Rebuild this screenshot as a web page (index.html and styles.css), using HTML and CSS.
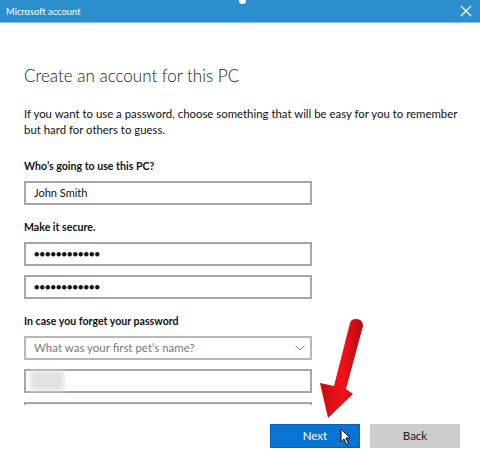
FILE: index.html
```html
<!DOCTYPE html>
<html>
<head>
<meta charset="utf-8">
<link rel="stylesheet" href="styles.css">
</head>
<body>
<div class="window">
  <div class="titlebar">
    <span class="title">Microsoft account</span>
    <span class="notch"></span>
    <svg class="close" width="12" height="12" viewBox="0 0 12 12"><path d="M1 1 L11 11 M11 1 L1 11" stroke="#ffffff" stroke-width="1.3" fill="none"/></svg>
  </div>
  <div class="content">
    <h1 class="heading">Create an account for this PC</h1>
    <p class="intro">If you want to use a password, choose something that will be easy for you to remember but hard for others to guess.</p>
    <div class="scroll">
      <div class="label">Who’s going to use this PC?</div>
      <div class="field">John Smith</div>
      <div class="label">Make it secure.</div>
      <div class="field dots">●●●●●●●●●●●●</div>
      <div class="field dots">●●●●●●●●●●●●</div>
      <div class="label">In case you forget your password</div>
      <div class="field select"><span class="placeholder">What was your first pet’s name?</span>
        <svg class="chev" width="10" height="6" viewBox="0 0 10 6"><path d="M0.5 0.5 L5 5 L9.5 0.5" stroke="#8a8a8a" stroke-width="1" fill="none"/></svg>
      </div>
      <div class="field blurred"><span class="smudge"></span></div>
      <div class="field"></div>
    </div>
    <div class="buttons">
      <div class="btn next">Next</div>
      <div class="btn back">Back</div>
    </div>
  </div>
  <svg class="arrow" width="60" height="110" viewBox="310 315 60 110">
    <defs>
      <linearGradient id="rg" x1="0" y1="0" x2="1" y2="0">
        <stop offset="0" stop-color="#c40d12"/>
        <stop offset="0.5" stop-color="#f2121a"/>
        <stop offset="1" stop-color="#b80a10"/>
      </linearGradient>
    </defs>
    <path d="M356 319 Q363 319 363 326 L346 389 L353 394 L328 418 L320 383 L334 386 L350 323 Q351 319 356 319 Z" fill="url(#rg)"/>
  </svg>
  <svg class="cursor" width="12" height="18" viewBox="0 0 12 18">
    <path d="M1 1 L1 14 L4 11 L6.5 16.5 L8.5 15.5 L6 10 L10 10 Z" fill="#ffffff" stroke="#000000" stroke-width="1"/>
  </svg>
</div>
</body>
</html>
```
FILE: styles.css
```css
html, body {
  margin: 0;
  padding: 0;
  background: #ffffff;
}
.window {
  position: relative;
  width: 480px;
  height: 450px;
  overflow: hidden;
  font-family: Lato, "Open Sans", sans-serif;
  color: #000000;
}
.titlebar {
  height: 23px;
  background: #2b8ecd;
  border-bottom: 1px solid #7fc0e8;
  display: flex;
  align-items: center;
  padding: 0 6px;
  box-sizing: border-box;
  position: relative;
}
.title {
  color: #ffffff;
  font-size: 9.4px;
  flex: 1;
}
.notch {
  position: absolute;
  left: 239px;
  top: -3px;
  width: 7px;
  height: 7px;
  border-radius: 50%;
  background: #ffffff;
}
.close {
  margin-right: 2px;
}
.content {
  padding: 0 24px;
}
.heading {
  margin: 40px 0 0 0;
  font-weight: 300;
  font-size: 17px;
  line-height: 26px;
  color: #1a1a1a;
}
.intro {
  margin: 17px 0 0 0;
  width: 440px;
  font-size: 11.4px;
  line-height: 16px;
  color: #111111;
}
.scroll {
  height: 247px;
  overflow: hidden;
  margin-top: 20px;
}
.label {
  font-size: 10.6px;
  font-weight: 700;
  line-height: 16px;
  margin-bottom: 7px;
  color: #111111;
}
.field {
  width: 288px;
  height: 24px;
  box-sizing: border-box;
  border: 2px solid #a6a6a6;
  font-size: 11px;
  line-height: 20px;
  padding: 0 8px;
  margin-bottom: 9px;
  color: #111111;
  position: relative;
  display: flex;
  align-items: center;
}
.field + .label {
  margin-top: 14px;
}
.dots {
  font-size: 9px;
  letter-spacing: 0.1px;
}
.select {
  justify-content: space-between;
  border-color: #b8b8b8;
  padding-right: 5px;
}
.placeholder {
  color: #7a7a7a;
  font-size: 11.5px;
}
.blurred {
  padding-left: 4px;
}
.smudge {
  width: 34px;
  height: 20px;
  background: #e2e2e2;
  filter: blur(2px);
}
.buttons {
  display: flex;
  justify-content: flex-end;
  gap: 10px;
  margin-top: 19px;
  margin-right: -4px;
}
.btn {
  width: 90px;
  height: 24px;
  font-size: 11.5px;
  line-height: 24px;
  text-align: center;
}
.next {
  background: #0a74d3;
  color: #ffffff;
  border: 1px solid #0a5fb0;
  box-sizing: border-box;
  line-height: 22px;
}
.back {
  background: #cccccc;
  color: #222222;
}
.arrow {
  position: absolute;
  left: 310px;
  top: 315px;
}
.cursor {
  position: absolute;
  left: 340px;
  top: 428px;
}
```
